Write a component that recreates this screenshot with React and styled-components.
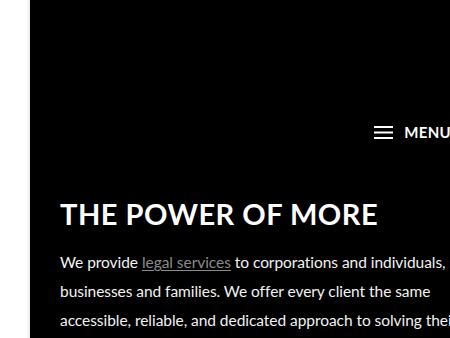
import React from "react";
import styled, { createGlobalStyle } from "styled-components";

const Global = createGlobalStyle`
  html, body { margin: 0; padding: 0; background: #fff; }
  body { font-family: Lato, "Open Sans", sans-serif; overflow: hidden; }
`;

const Page = styled.div`
  display: flex;
  width: 450px;
  height: 338px;
  overflow: hidden;
`;

const Gutter = styled.div`
  flex: 0 0 30px;
  background: linear-gradient(to right, #fff 0, #fff 26px, #ececec 30px);
`;

const Panel = styled.div`
  flex: 0 0 480px;
  background: #000;
  padding: 0 0 0 30px;
  box-sizing: border-box;
  color: #fff;
`;

const Header = styled.header`
  display: flex;
  justify-content: flex-end;
  align-items: center;
  width: 391px;
  height: 24px;
  margin-top: 120px;
`;

const MenuButton = styled.button`
  display: flex;
  align-items: center;
  gap: 11px;
  background: none;
  border: 0;
  padding: 0;
  color: #fff;
  font-family: Lato, "Open Sans", sans-serif;
  font-weight: 700;
  font-size: 15px;
  letter-spacing: 0.3px;
  white-space: nowrap;
`;

const Content = styled.section`
  width: 432px;
  padding-top: 50px;
`;

const Title = styled.h1`
  margin: 0;
  font-family: Lato, "Open Sans", sans-serif;
  font-weight: 700;
  font-size: 29px;
  line-height: 40px;
  letter-spacing: 0.5px;
  white-space: nowrap;
`;

const Body = styled.p`
  margin: 14px 0 0;
  font-size: 15.5px;
  letter-spacing: -0.05px;
  line-height: 29px;
  color: #f2f2f2;
`;

const Link = styled.a`
  color: #8a8a8a;
  text-decoration: underline;
  text-underline-offset: 2px;
`;

export default function App() {
  return (
    <>
      <Global />
      <Page>
        <Gutter />
        <Panel>
          <Header>
            <MenuButton>
              <svg width="19" height="13" viewBox="0 0 19 13">
                <rect x="0" y="0" width="19" height="2" fill="#fff" />
                <rect x="0" y="5.5" width="19" height="2" fill="#fff" />
                <rect x="0" y="11" width="19" height="2" fill="#fff" />
              </svg>
              MENU
            </MenuButton>
          </Header>
          <Content>
            <Title>THE POWER OF MORE</Title>
            <Body>
              We provide <Link href="#">legal services</Link> to corporations
              and individuals, small businesses and families. We offer every
              client the same accessible, reliable, and dedicated approach to
              solving their legal needs.
            </Body>
          </Content>
        </Panel>
      </Page>
    </>
  );
}
